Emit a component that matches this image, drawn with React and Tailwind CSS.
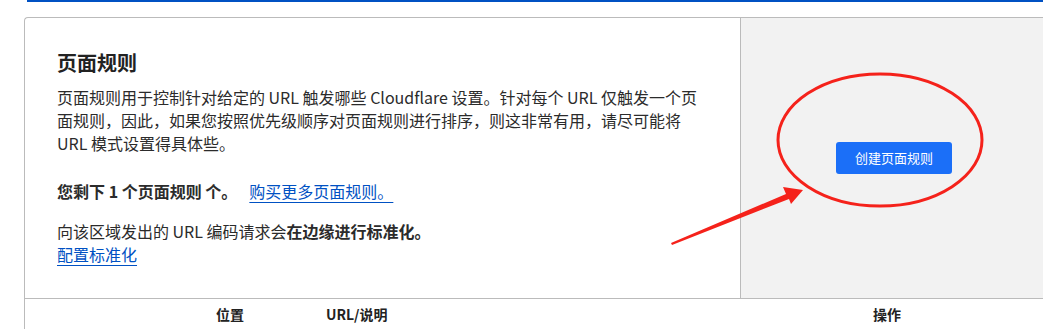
import React from 'react';

const font = "font-['Microsoft_YaHei','Noto_Sans_CJK_SC','Noto_Sans',sans-serif]";

const Annotation = () => (
  <svg
    className="pointer-events-none absolute left-0 top-0"
    width="1043"
    height="329"
    viewBox="0 0 1043 329"
  >
    {/* circle round the button */}
    <ellipse cx="880" cy="140" rx="102" ry="66" fill="none" stroke="#f5221b" strokeWidth="3" />
    {/* arrow pointing at it */}
    <polygon
      points="671,243 786,194 783,187 803,190 791,204 789,199 672,245"
      fill="#f5221b"
    />
  </svg>
);

const App = () => {
  return (
    <div className={`relative h-[329px] w-[1043px] overflow-hidden bg-white text-[#2b2b2b] ${font}`}>
      <div className="ml-[27px] h-[2px] bg-[#0051c3]"></div>

      <div className="ml-6 mt-[15px] rounded-tl-[4px] border-l border-t border-[#bbbbbb]">
        <div className="flex border-b border-[#bbbbbb]">
          {/* left description */}
          <div className="w-[716px] shrink-0 border-r border-[#bbbbbb] px-8 pb-8 pt-8">
            <h2 className="text-[20px] font-bold leading-[26px] text-[#222]">页面规则</h2>
            <p className="mt-[10px] text-[16px] leading-[23px]">
              页面规则用于控制针对给定的 URL 触发哪些 Cloudflare 设置。针对每个 URL 仅触发一个页
              <br />
              面规则，因此，如果您按照优先级顺序对页面规则进行排序，则这非常有用，请尽可能将
              <br />
              URL 模式设置得具体些。
            </p>
            <p className="mt-[25px] text-[16px] leading-[23px]">
              <span className="font-bold">您剩下 1 个页面规则 个。</span>
              <a href="#" className="ml-[12px] text-[#0051c3] underline underline-offset-[4px]">
                购买更多页面规则。
              </a>
            </p>
            <p className="mt-[17px] text-[16px] leading-[23px]">
              向该区域发出的 URL 编码请求会<span className="font-bold">在边缘进行标准化。</span>
              <br />
              <a href="#" className="text-[#0051c3] underline underline-offset-[4px]">
                配置标准化
              </a>
            </p>
          </div>

          {/* right action panel */}
          <div className="flex flex-1 items-center justify-center bg-[#f2f2f2] pl-1">
            <button className="h-8 w-[116px] rounded-[3px] bg-[#1b6ff8] text-[13px] text-white">
              创建页面规则
            </button>
          </div>
        </div>

        {/* table header */}
        <div className="grid h-[30px] grid-cols-[191px_110px_547px_1fr] items-center text-[14px] font-bold text-[#222]">
          <div></div>
          <div>位置</div>
          <div>URL/说明</div>
          <div>操作</div>
        </div>
      </div>

      <Annotation />
    </div>
  );
};

export default App;
